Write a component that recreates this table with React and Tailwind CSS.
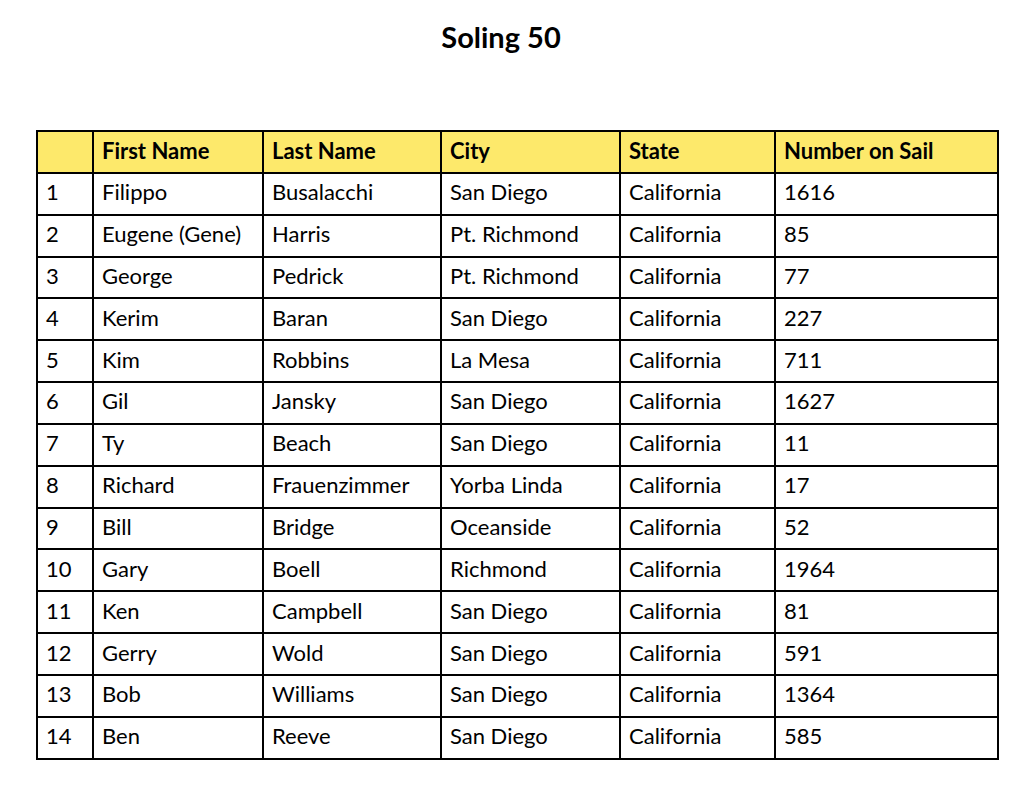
const rows = [
  ["1", "Filippo", "Busalacchi", "San Diego", "California", "1616"],
  ["2", "Eugene (Gene)", "Harris", "Pt. Richmond", "California", "85"],
  ["3", "George", "Pedrick", "Pt. Richmond", "California", "77"],
  ["4", "Kerim", "Baran", "San Diego", "California", "227"],
  ["5", "Kim", "Robbins", "La Mesa", "California", "711"],
  ["6", "Gil", "Jansky", "San Diego", "California", "1627"],
  ["7", "Ty", "Beach", "San Diego", "California", "11"],
  ["8", "Richard", "Frauenzimmer", "Yorba Linda", "California", "17"],
  ["9", "Bill", "Bridge", "Oceanside", "California", "52"],
  ["10", "Gary", "Boell", "Richmond", "California", "1964"],
  ["11", "Ken", "Campbell", "San Diego", "California", "81"],
  ["12", "Gerry", "Wold", "San Diego", "California", "591"],
  ["13", "Bob", "Williams", "San Diego", "California", "1364"],
  ["14", "Ben", "Reeve", "San Diego", "California", "585"],
];

const headers = ["", "First Name", "Last Name", "City", "State", "Number on Sail"];
const widths = ["w-[56px]", "w-[170px]", "w-[178px]", "w-[179px]", "w-[155px]", "w-[223px]"];

export default function App() {
  return (
    <div className="w-[1024px] h-[785px] bg-white text-black font-['Lato',_'Open_Sans',_sans-serif]">
      <h1 className="pt-[19px] pr-[22px] text-center text-[29px] font-bold leading-[36px]">Soling 50</h1>
      <div className="pl-[36px] pt-[75px]">
        <table className="border-collapse table-fixed w-[961px] border-2 border-black">
          <thead>
            <tr className="bg-[#fde96b] h-[41.85px]">
              {headers.map((h, i) => (
                <th
                  key={i}
                  className={`${widths[i]} border-2 border-black text-left font-bold text-[22px] leading-[24px] px-[8px] pt-0 pb-[2px]`}
                >
                  {h}
                </th>
              ))}
            </tr>
          </thead>
          <tbody>
            {rows.map((r) => (
              <tr key={r[0]} className="h-[41.85px]">
                {r.map((c, i) => (
                  <td key={i} className="border-2 border-black text-[22px] leading-[24px] px-[8px] pt-0 pb-[3px]">
                    {c}
                  </td>
                ))}
              </tr>
            ))}
          </tbody>
        </table>
      </div>
    </div>
  );
}
